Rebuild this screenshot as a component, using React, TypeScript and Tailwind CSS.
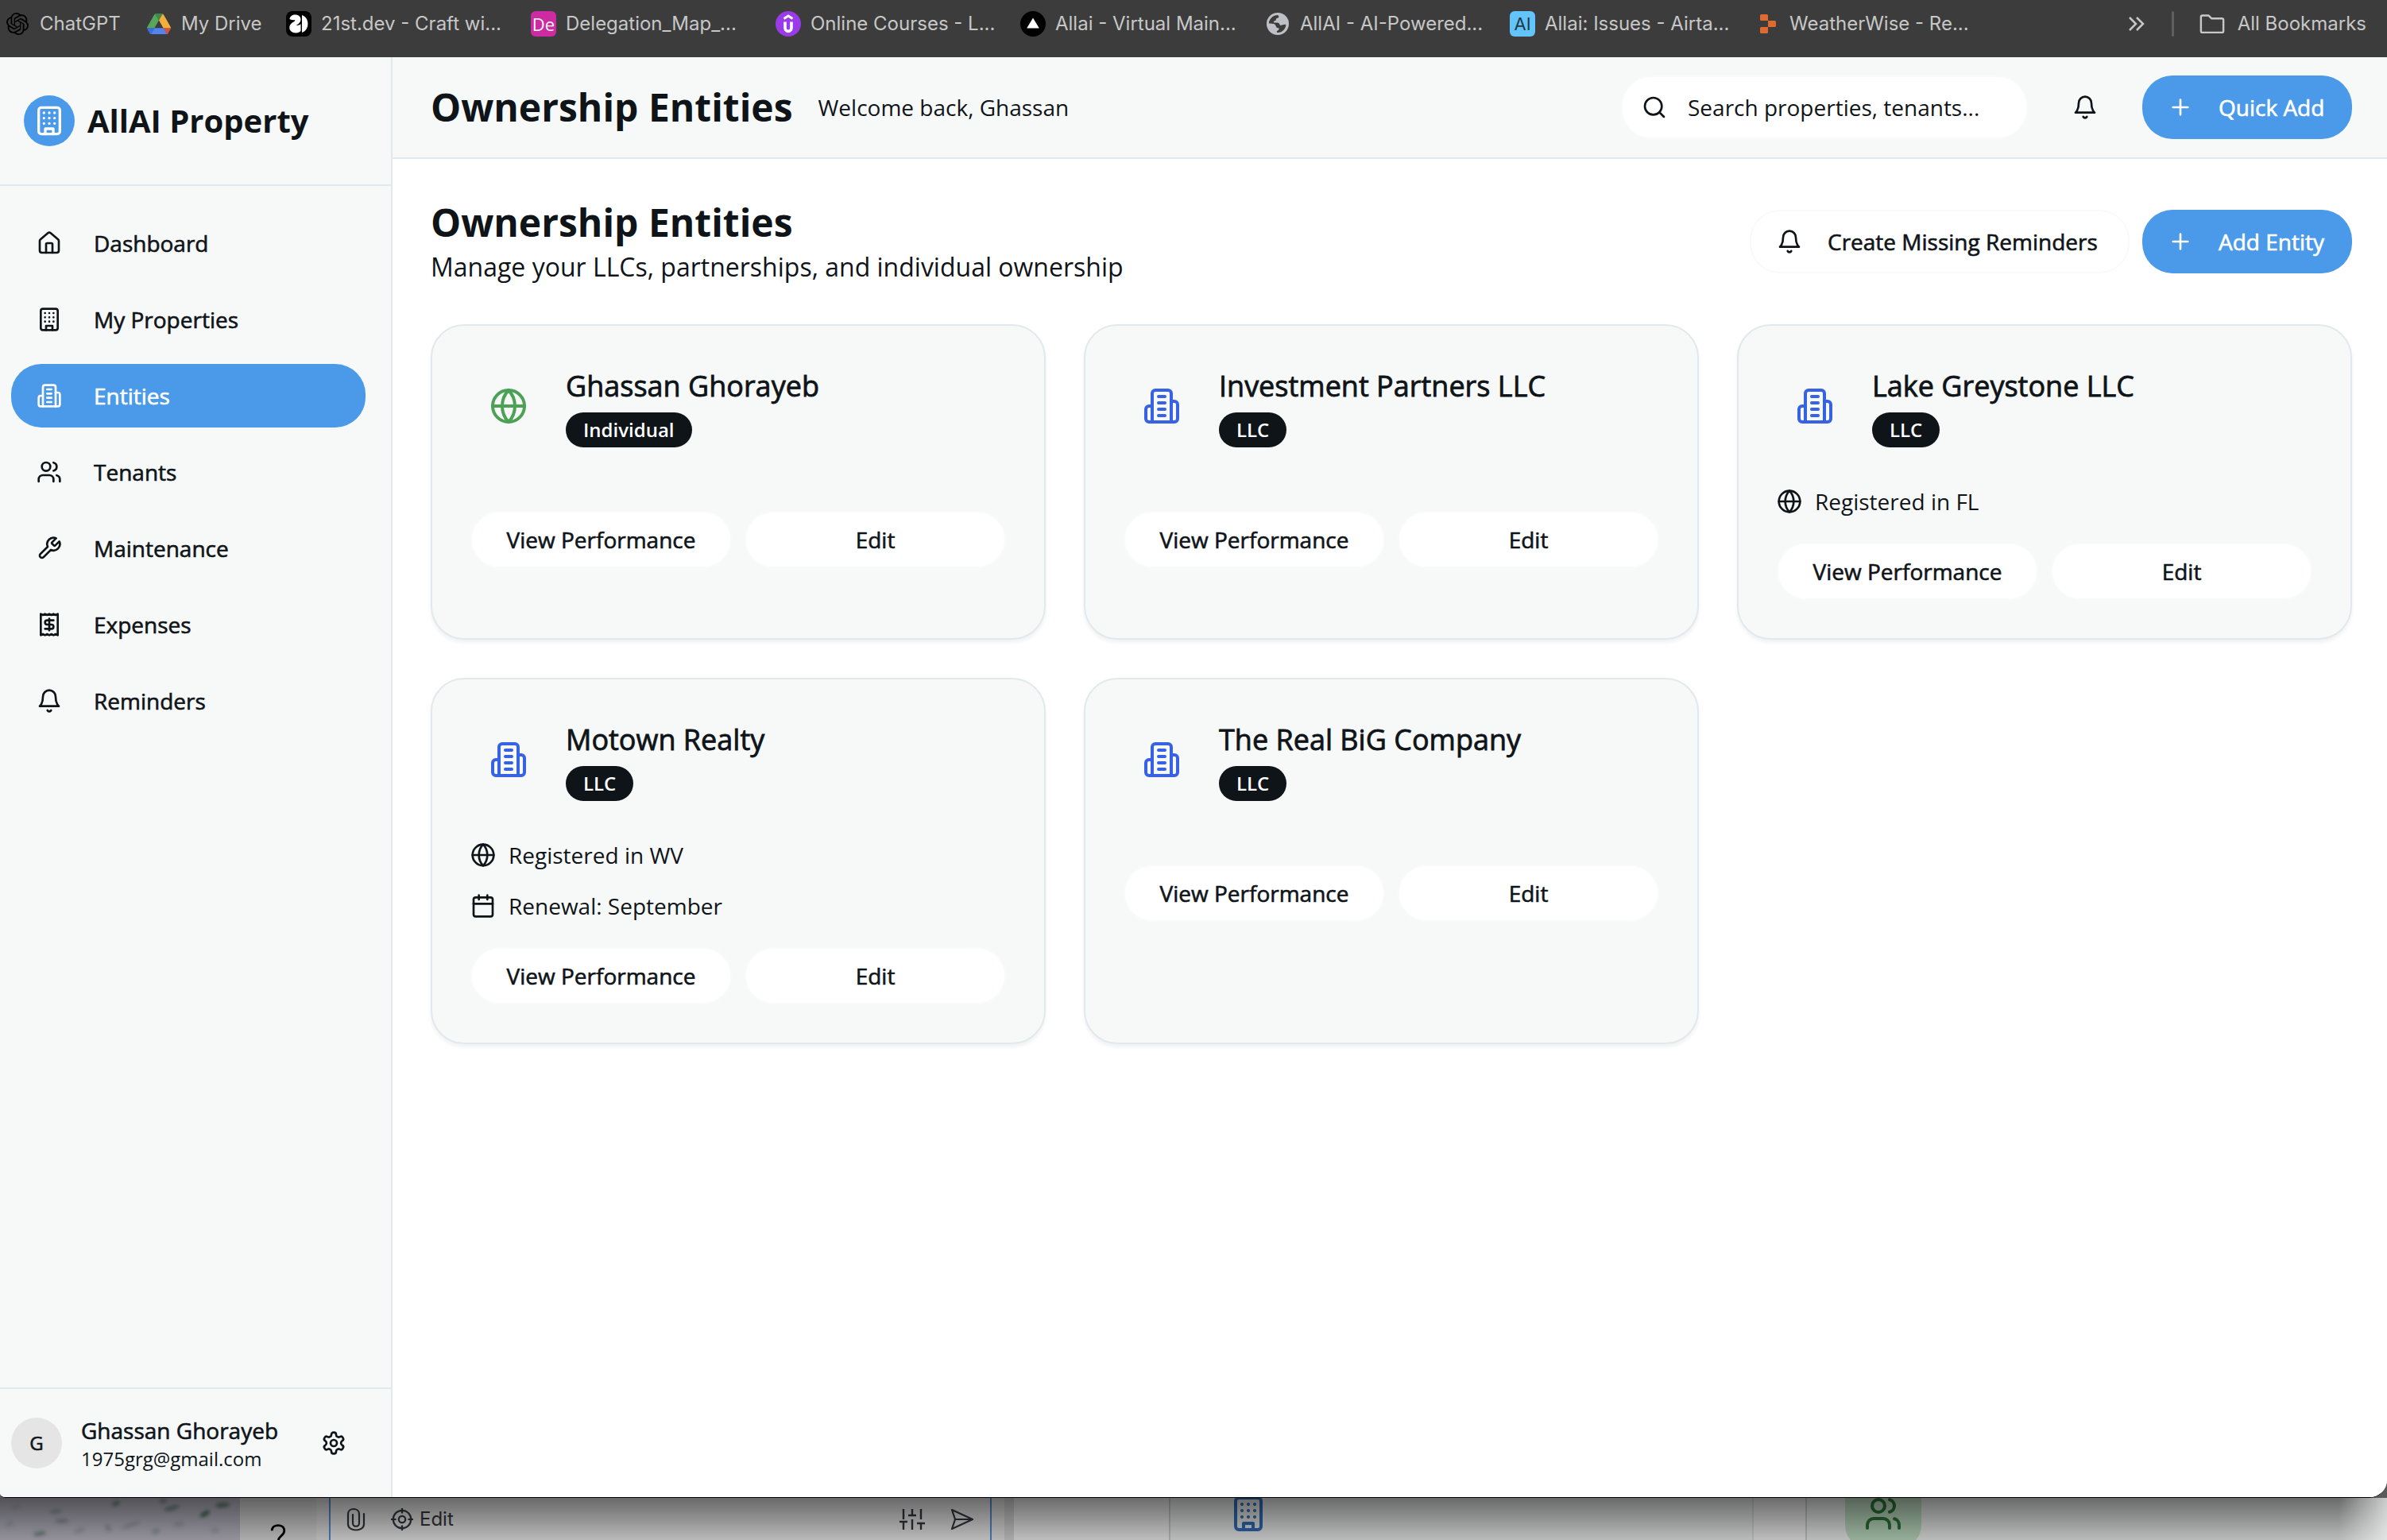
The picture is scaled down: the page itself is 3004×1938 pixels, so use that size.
import type { ReactNode } from "react";
import { SiOpenai } from "react-icons/si";

type IconProps = { className?: string };

function Stroke({ className = "size-8", children }: { className?: string; children: ReactNode }) {
  return (
    <svg
      viewBox="0 0 24 24"
      fill="none"
      stroke="currentColor"
      strokeWidth={2}
      strokeLinecap="round"
      strokeLinejoin="round"
      aria-hidden="true"
      className={"shrink-0 " + className}
    >
      {children}
    </svg>
  );
}

const HomeIcon = (p: IconProps) => (
  <Stroke {...p}>
    <path d="M15 21v-8a1 1 0 0 0-1-1h-4a1 1 0 0 0-1 1v8" />
    <path d="M3 10a2 2 0 0 1 .709-1.528l7-5.999a2 2 0 0 1 2.582 0l7 5.999A2 2 0 0 1 21 10v9a2 2 0 0 1-2 2H5a2 2 0 0 1-2-2z" />
  </Stroke>
);

const BuildingIcon = (p: IconProps) => (
  <Stroke {...p}>
    <rect width="16" height="20" x="4" y="2" rx="2" ry="2" />
    <path d="M9 22v-4h6v4" />
    <path d="M8 6h.01M16 6h.01M12 6h.01M12 10h.01M12 14h.01M16 10h.01M16 14h.01M8 10h.01M8 14h.01" />
  </Stroke>
);

const TowersIcon = (p: IconProps) => (
  <Stroke {...p}>
    <path d="M6 22V4a2 2 0 0 1 2-2h8a2 2 0 0 1 2 2v18Z" />
    <path d="M6 12H4a2 2 0 0 0-2 2v6a2 2 0 0 0 2 2h2" />
    <path d="M18 9h2a2 2 0 0 1 2 2v9a2 2 0 0 1-2 2h-2" />
    <path d="M10 6h4M10 10h4M10 14h4M10 18h4" />
  </Stroke>
);

const UsersIcon = (p: IconProps) => (
  <Stroke {...p}>
    <path d="M16 21v-2a4 4 0 0 0-4-4H6a4 4 0 0 0-4 4v2" />
    <circle cx="9" cy="7" r="4" />
    <path d="M22 21v-2a4 4 0 0 0-3-3.87" />
    <path d="M16 3.13a4 4 0 0 1 0 7.75" />
  </Stroke>
);

const WrenchIcon = (p: IconProps) => (
  <Stroke {...p}>
    <path d="M14.7 6.3a1 1 0 0 0 0 1.4l1.6 1.6a1 1 0 0 0 1.4 0l3.77-3.77a6 6 0 0 1-7.94 7.94l-6.91 6.91a2.12 2.12 0 0 1-3-3l6.91-6.91a6 6 0 0 1 7.94-7.94l-3.76 3.76z" />
  </Stroke>
);

const ReceiptIcon = (p: IconProps) => (
  <Stroke {...p}>
    <path d="M4 2v20l2-1 2 1 2-1 2 1 2-1 2 1 2-1 2 1V2l-2 1-2-1-2 1-2-1-2 1-2-1-2 1Z" />
    <path d="M16 8h-6a2 2 0 1 0 0 4h4a2 2 0 1 1 0 4H8" />
    <path d="M12 17.5v-11" />
  </Stroke>
);

const BellIcon = (p: IconProps) => (
  <Stroke {...p}>
    <path d="M6 8a6 6 0 0 1 12 0c0 7 3 9 3 9H3s3-2 3-9" />
    <path d="M10.3 21a1.94 1.94 0 0 0 3.4 0" />
  </Stroke>
);

const GlobeIcon = (p: IconProps) => (
  <Stroke {...p}>
    <circle cx="12" cy="12" r="10" />
    <path d="M12 2a14.5 14.5 0 0 0 0 20 14.5 14.5 0 0 0 0-20" />
    <path d="M2 12h20" />
  </Stroke>
);

const CalendarIcon = (p: IconProps) => (
  <Stroke {...p}>
    <path d="M8 2v4M16 2v4" />
    <rect width="18" height="18" x="3" y="4" rx="2" />
    <path d="M3 10h18" />
  </Stroke>
);

const PlusIcon = (p: IconProps) => (
  <Stroke {...p}>
    <path d="M5 12h14M12 5v14" />
  </Stroke>
);

const SearchIcon = (p: IconProps) => (
  <Stroke {...p}>
    <circle cx="11" cy="11" r="8" />
    <path d="m21 21-4.3-4.3" />
  </Stroke>
);

const SettingsIcon = (p: IconProps) => (
  <Stroke {...p}>
    <path d="M12.22 2h-.44a2 2 0 0 0-2 2v.18a2 2 0 0 1-1 1.73l-.43.25a2 2 0 0 1-2 0l-.15-.08a2 2 0 0 0-2.73.73l-.22.38a2 2 0 0 0 .73 2.73l.15.1a2 2 0 0 1 1 1.72v.51a2 2 0 0 1-1 1.74l-.15.09a2 2 0 0 0-.73 2.73l.22.38a2 2 0 0 0 2.73.73l.15-.08a2 2 0 0 1 2 0l.43.25a2 2 0 0 1 1 1.73V20a2 2 0 0 0 2 2h.44a2 2 0 0 0 2-2v-.18a2 2 0 0 1 1-1.73l.43-.25a2 2 0 0 1 2 0l.15.08a2 2 0 0 0 2.73-.73l.22-.39a2 2 0 0 0-.73-2.73l-.15-.08a2 2 0 0 1-1-1.74v-.5a2 2 0 0 1 1-1.74l.15-.09a2 2 0 0 0 .73-2.73l-.22-.38a2 2 0 0 0-2.73-.73l-.15.08a2 2 0 0 1-2 0l-.43-.25a2 2 0 0 1-1-1.73V4a2 2 0 0 0-2-2z" />
    <circle cx="12" cy="12" r="3" />
  </Stroke>
);

/* Favicons */

const DriveLogo = () => (
  <svg viewBox="0 0 87.3 78" className="w-[30px] shrink-0" aria-hidden="true">
    <path fill="#3b6fe0" d="m6.6 66.85 3.85 6.65c.8 1.4 1.95 2.5 3.3 3.3l13.75-23.8h-27.5c0 1.55.4 3.1 1.2 4.5z" />
    <path fill="#58a55c" d="m43.65 25-13.75-23.8c-1.35.8-2.5 1.9-3.3 3.3l-25.4 44a9.06 9.06 0 0 0 -1.2 4.5h27.5z" />
    <path fill="#d9523f" d="m73.55 76.8c1.35-.8 2.5-1.9 3.3-3.3l1.6-2.75 7.65-13.25c.8-1.4 1.2-2.95 1.2-4.5h-27.502l5.852 11.5z" />
    <path fill="#3f8a47" d="m43.65 25 13.75-23.8c-1.35-.8-2.9-1.2-4.5-1.2h-18.5c-1.6 0-3.15.45-4.5 1.2z" />
    <path fill="#5383ec" d="m59.8 53h-32.3l-13.75 23.8c1.35.8 2.9 1.2 4.5 1.2h50.8c1.6 0 3.15-.45 4.5-1.2z" />
    <path fill="#f1b03e" d="m73.4 26.5-12.7-22c-.8-1.4-1.95-2.5-3.3-3.3l-13.75 23.8 16.15 28h27.45c0-1.55-.4-3.1-1.2-4.5z" />
  </svg>
);

const TwentyFirstLogo = () => (
  <svg viewBox="0 0 32 32" className="size-8 shrink-0" aria-hidden="true">
    <rect width="32" height="32" rx="8" fill="#000" />
    <path
      fill="#fff"
      d="M4.400 10C5 6.600 8 4.600 11.500 4.600c4.200 0 7 2.400 7 6 0 3.400-2.400 5.800-5.800 7.200 2.200.3 4.200-.3 5.800-1.600V25c-1.400 1.600-3.400 2.400-6.200 2.400-4.800 0-8-2.600-8-6.600 0-3.400 2.200-5.600 5.200-7.200 1.200-.7 1.800-1.400 1.700-2.600-2 .6-4.200.2-6.800-1Z"
    />
    <path fill="#fff" d="M20 5c4.400 1.400 7.400 5.600 7.400 11S24.400 25.600 20 27Z" />
  </svg>
);

const UdemyLogo = () => (
  <svg viewBox="0 0 32 32" className="size-8 shrink-0" aria-hidden="true">
    <circle cx="16" cy="16" r="16" fill="#9a3ae8" />
    <path fill="none" stroke="#fff" strokeWidth="3" d="m10.500 9.500 5.500-3.500 5.500 3.500" />
    <path fill="none" stroke="#fff" strokeWidth="3.600" d="M12 13.500v7.500c0 5.800 8 5.800 8 0v-7.500" />
  </svg>
);

const TriangleLogo = () => (
  <svg viewBox="0 0 32 32" className="size-8 shrink-0" aria-hidden="true">
    <circle cx="16" cy="16" r="16" fill="#000" />
    <path fill="#fff" d="m16 8.500 7.800 13H8.200Z" />
  </svg>
);

const PlanetLogo = () => (
  <svg viewBox="0 0 32 32" className="size-8 shrink-0" aria-hidden="true">
    <circle cx="16" cy="16" r="14" fill="#bdc1c6" />
    <path
      fill="#3c3c3c"
      d="M4.800 15.500C5 10 9.500 5.400 15.500 4.900c2 .1 2.600 2.600.9 3.600-2.400.3-2.800 1.500-2.600 3-1.600.5-3 1.300-3 2.800 1.800.7 5.400-.6 7 1.200.8 1 .6 2.200 1.800 2.500 1.800.1 3.400-1.500 6.800-1.100-.4 5.200-4.600 9.800-10 10.200-1.700 0-2.200-1.600-1-2.400 1.500-.6 2.500-1.600 2.200-3.200-2.600-.2-4-1.400-4.300-3.800-1-1.800-3.700-2.400-8.500-2.200Z"
    />
  </svg>
);

const ReplitLogo = () => (
  <svg viewBox="0 0 32 32" className="size-8 shrink-0" aria-hidden="true">
    <path fill="#e0692d" d="M7 5.500Q7 4 8.500 4H15.500Q17 4 17 5.500V12H8.500Q7 12 7 10.500ZM17 12h8.500q1.500 0 1.500 1.500v5q0 1.500-1.500 1.500H17ZM7 21.500Q7 20 8.500 20H17v6.500q0 1.500-1.500 1.500H8.500Q7 28 7 26.500Z" />
  </svg>
);

const bookmarks: { label: string; width: string; logo: ReactNode }[] = [
  {
    label: "ChatGPT",
    width: "w-[178px]",
    logo: (
      <span className="flex size-8 shrink-0 items-center justify-center text-black">
        <SiOpenai className="size-7" />
      </span>
    ),
  },
  { label: "My Drive", width: "w-[176px]", logo: <span className="flex w-8 shrink-0 justify-center"><DriveLogo /></span> },
  { label: "21st.dev - Craft wi...", width: "w-[308px]", logo: <TwentyFirstLogo /> },
  {
    label: "Delegation_Map_...",
    width: "w-[308px]",
    logo: (
      <span className="flex size-8 shrink-0 items-center justify-center rounded-md bg-[#cc2ba2] font-['Open_Sans'] text-[22px] font-medium text-white">
        De
      </span>
    ),
  },
  { label: "Online Courses - L...", width: "w-[308px]", logo: <UdemyLogo /> },
  { label: "Allai - Virtual Main...", width: "w-[308px]", logo: <TriangleLogo /> },
  { label: "AllAI - AI-Powered...", width: "w-[308px]", logo: <PlanetLogo /> },
  {
    label: "Allai: Issues - Airta...",
    width: "w-[308px]",
    logo: (
      <span className="flex size-8 shrink-0 items-center justify-center rounded-md bg-[#63c4f9] text-[22px] text-[#1f3a4a]">
        AI
      </span>
    ),
  },
  { label: "WeatherWise - Re...", width: "w-[308px]", logo: <ReplitLogo /> },
];

function BookmarksBar() {
  return (
    <nav
      aria-label="Bookmarks"
      className="flex h-[72px] shrink-0 items-center bg-[#3c3c3c] pr-[26px] pb-3 pl-[6px] font-['Inter',sans-serif] text-[24px] leading-8 text-[#c7c7c7]"
    >
      {bookmarks.map((b) => (
        <a key={b.label} href="#" className={"flex shrink-0 items-center gap-3 whitespace-nowrap " + b.width}>
          {b.logo}
          {b.label}
        </a>
      ))}
      <button aria-label="More bookmarks" className="ml-auto">
        <svg viewBox="0 0 24 20" className="w-6" fill="none" stroke="currentColor" strokeWidth="2.500" aria-hidden="true">
          <path d="m3 2 8 8-8 8M12 2l8 8-8 8" />
        </svg>
      </button>
      <span className="mr-8 ml-8 h-8 w-[3px] rounded bg-[#5f5f5f]" />
      <a href="#" className="flex items-center gap-4 whitespace-nowrap">
        <svg viewBox="0 0 34 26" className="w-8" fill="none" stroke="currentColor" strokeWidth="2.600" strokeLinejoin="round" aria-hidden="true">
          <path d="M2 3.500Q2 1.500 4 1.500H12l4 4H30q2 0 2 2V22.500q0 2-2 2H4q-2 0-2-2Z" />
        </svg>
        All Bookmarks
      </a>
    </nav>
  );
}

const navItems = [
  { label: "Dashboard", Icon: HomeIcon },
  { label: "My Properties", Icon: BuildingIcon },
  { label: "Entities", Icon: TowersIcon, active: true },
  { label: "Tenants", Icon: UsersIcon },
  { label: "Maintenance", Icon: WrenchIcon },
  { label: "Expenses", Icon: ReceiptIcon },
  { label: "Reminders", Icon: BellIcon },
];

function Sidebar() {
  return (
    <aside className="flex w-[494px] shrink-0 flex-col border-r-2 border-[#e2e9ec] bg-[#f7f9f8]">
      <div className="flex h-[162px] items-center gap-4 border-b-2 border-[#e2e9ec] pl-[30px]">
        <span className="flex size-16 items-center justify-center rounded-full bg-[#4b9aea] text-white">
          <BuildingIcon className="size-10" />
        </span>
        <span className="text-[40px] leading-14 font-bold">AllAI Property</span>
      </div>
      <nav aria-label="Main" className="flex flex-1 flex-col gap-4 py-8 pr-8 pl-[14px]">
        {navItems.map(({ label, Icon, active }) => (
          <a
            key={label}
            href="#"
            aria-current={active ? "page" : undefined}
            className={
              "flex h-20 items-center gap-10 rounded-[38px] px-8 text-[28px] leading-10 font-medium [-webkit-text-stroke:0.6px] " +
              (active ? "bg-[#4b9aea] text-white" : "")
            }
          >
            <Icon />
            {label}
          </a>
        ))}
      </nav>
      <div className="flex items-center border-t-2 border-[#e2e9ec] py-8 pr-[56px] pl-[14px]">
        <span className="flex size-16 items-center justify-center rounded-full bg-[#e5e5e5] text-[24px] font-medium [-webkit-text-stroke:0.6px]">G</span>
        <div className="ml-6 flex-1">
          <p className="text-[28px] leading-10 font-medium [-webkit-text-stroke:0.6px]">Ghassan Ghorayeb</p>
          <p className="text-[24px] leading-8">1975grg@gmail.com</p>
        </div>
        <button aria-label="Settings">
          <SettingsIcon />
        </button>
      </div>
    </aside>
  );
}

function PrimaryButton({ children }: { children: ReactNode }) {
  return (
    <button className="flex h-20 min-w-[264px] items-center gap-8 rounded-[38px] bg-[#4b9aea] px-8 text-[28px] leading-10 font-medium whitespace-nowrap text-white [-webkit-text-stroke:0.6px]">
      <PlusIcon />
      {children}
    </button>
  );
}

function TopBar() {
  return (
    <header className="flex h-32 items-center border-b-2 border-[#e2e9ec] bg-[#f7f9f8] pr-11 pl-12">
      <h1 className="text-[48px] leading-16 font-bold">Ownership Entities</h1>
      <p className="ml-8 text-[28px] leading-10">Welcome back, Ghassan</p>
      <label className="mr-8 ml-auto flex h-20 w-[512px] items-center gap-[26px] rounded-[38px] border-2 border-[#f9fafa] bg-white px-6">
        <SearchIcon />
        <input
          type="search"
          aria-label="Search"
          placeholder="Search properties, tenants..."
          className="min-w-0 flex-1 bg-transparent text-[28px] leading-10 outline-none placeholder:text-[#0f1419]"
        />
      </label>
      <button aria-label="Notifications" className="mr-8 flex size-20 items-center justify-center">
        <BellIcon />
      </button>
      <PrimaryButton>Quick Add</PrimaryButton>
    </header>
  );
}

type Entity = { name: string; type: string; state?: string; renewal?: string };

const entities: Entity[] = [
  { name: "Ghassan Ghorayeb", type: "Individual" },
  { name: "Investment Partners LLC", type: "LLC" },
  { name: "Lake Greystone LLC", type: "LLC", state: "FL" },
  { name: "Motown Realty", type: "LLC", state: "WV", renewal: "September" },
  { name: "The Real BiG Company", type: "LLC" },
];

function CardButton({ children }: { children: ReactNode }) {
  return (
    <button className="h-[72px] flex-1 rounded-[38px] border-2 border-[#f9fafa] bg-white text-[28px] leading-10 font-medium [-webkit-text-stroke:0.6px]">
      {children}
    </button>
  );
}

function EntityCard({ name, type, state, renewal }: Entity) {
  const individual = type === "Individual";
  return (
    <article className="rounded-[42px] border-2 border-[#e2e9ec] bg-[#f7f9f8] p-12 shadow-[0_4px_4px_rgba(15,40,60,0.06)]">
      <div className="flex items-center gap-6">
        <span className={"flex size-24 items-center justify-center " + (individual ? "text-[#4ca154]" : "text-[#3662e3]")}>
          {individual ? <GlobeIcon className="size-12" /> : <TowersIcon className="size-12" />}
        </span>
        <div>
          <h3 className="text-[36px] leading-14 font-medium [-webkit-text-stroke:0.8px]">{name}</h3>
          <span className="mt-[5px] flex h-11 w-fit items-center rounded-full bg-[#0f1419] px-[22px] text-[24px] font-semibold text-white">
            {type}
          </span>
        </div>
      </div>
      <div className="mt-12 flex flex-col gap-6 text-[28px] leading-10">
        {state && (
          <p className="flex items-center gap-4">
            <GlobeIcon />
            Registered in {state}
          </p>
        )}
        {renewal && (
          <p className="flex items-center gap-4">
            <CalendarIcon />
            Renewal: {renewal}
          </p>
        )}
      </div>
      <div className="mt-8 flex gap-4">
        <CardButton>View Performance</CardButton>
        <CardButton>Edit</CardButton>
      </div>
    </article>
  );
}

function EntitiesPage() {
  return (
    <main className="flex-1 bg-white pt-12 pr-11 pl-12">
      <div className="mb-12 flex items-center gap-4">
        <div className="mr-auto">
          <h2 className="text-[48px] leading-16 font-bold">Ownership Entities</h2>
          <p className="text-[32px] leading-12">Manage your LLCs, partnerships, and individual ownership</p>
        </div>
        <button className="flex h-20 min-w-[478px] items-center gap-8 rounded-[38px] border-2 border-[#f9fafa] bg-white px-8 text-[28px] leading-10 font-medium whitespace-nowrap [-webkit-text-stroke:0.6px]">
          <BellIcon />
          Create Missing Reminders
        </button>
        <PrimaryButton>Add Entity</PrimaryButton>
      </div>
      <section aria-label="Entities" className="grid grid-cols-3 gap-12">
        {entities.map((e) => (
          <EntityCard key={e.name} {...e} />
        ))}
      </section>
    </main>
  );
}

/* Leaf flecks of the desktop photo: x, y, length, angle, opacity */
const flecks = [
  [146, 7, 10, -20, 0.6], [70, 17, 16, -5, 0.3], [78, 29, 18, 0, 0.35], [50, 45, 16, -8, 0.5],
  [216, 13, 20, -15, 0.5], [205, 4, 10, 10, 0.4], [258, 20, 14, -30, 0.9], [280, 9, 18, -5, 0.7],
  [136, 38, 10, 60, 0.3], [165, 34, 24, -20, 0.2], [100, 41, 14, -20, 0.2], [196, 42, 10, -15, 0.3],
  [12, 33, 12, -25, 0.15], [20, 12, 14, -20, 0.12], [225, 33, 14, -10, 0.2], [270, 41, 10, 10, 0.2],
];

/* Windows that show below the browser's bottom edge */
function Backdrop() {
  return (
    <div aria-hidden="true" className="relative flex h-[53px] shrink-0 overflow-hidden bg-[#f4f4f4] text-[#383a42]">
      <svg viewBox="0 0 302 53" className="h-full w-[302px] shrink-0 bg-[#c2bfcc]">
        <g className="blur-[2px]">
          {flecks.map(([x, y, len, angle, o]) => (
            <ellipse key={x + "-" + y} cx={x} cy={y} rx={len / 2} ry="3" fill="#3d6a50" opacity={o} transform={`rotate(${angle} ${x} ${y})`} />
          ))}
        </g>
      </svg>
      <div className="flex w-24 justify-center bg-[#e2e3e2] pt-8 text-black">
        <svg viewBox="0 0 18 30" className="h-[34px] w-[20px]" fill="none" stroke="currentColor" strokeWidth="2.500">
          <path d="M2 8C2 0 16 0 16 8c0 6-7 6-7 12v8" />
        </svg>
      </div>
      <div className="w-4 bg-[#ececec]" />
      <div className="flex h-[53px] w-[834px] items-center border-x-2 border-[#5b93dc] px-5 font-['Inter',sans-serif] text-[24px]">
        <svg viewBox="0 0 24 32" className="mr-8 h-8 w-6" fill="none" stroke="currentColor" strokeWidth="2.200" strokeLinecap="round">
          <path d="M22 9v13c0 10-20 10-20 0V9c0-8 14-8 14 0v12c0 5-8 5-8 0V10" />
        </svg>
        <svg viewBox="0 0 30 30" className="mr-2 size-7" fill="none" stroke="currentColor" strokeWidth="2.400">
          <circle cx="15" cy="15" r="12" />
          <circle cx="15" cy="15" r="4.500" />
          <path d="M15 0v7M15 23v7M0 15h7M23 15h7" />
        </svg>
        Edit
        <svg viewBox="0 0 32 28" className="mr-8 ml-auto w-8" fill="none" stroke="currentColor" strokeWidth="2.400">
          <path d="M5 1v13M0 17h10M5 17v10M16 1v9M11 9h10M16 14v13M27 1v13M22 19h10M27 19v8" />
        </svg>
        <svg viewBox="0 0 30 28" className="w-[30px]" fill="none" stroke="currentColor" strokeWidth="2.200" strokeLinejoin="round">
          <path d="M2 2 28 14 2 26l4-12ZM6 14h22" />
        </svg>
      </div>
      <div className="w-4 bg-[#f0f0f0]" />
      <div className="w-3 bg-[#dedede]" />
      <div className="w-[197px] border-r-2 border-[#d4d4d4] bg-[#fbfafb]" />
      <div className="w-[734px] border-r-2 border-[#e4e4e4] bg-[#f5f7f6] pl-[74px]">
        <BuildingIcon className="-mt-1 size-12 text-[#3273c4]" />
      </div>
      <div className="w-[67px] border-r-2 border-[#d4d4d4] bg-[#fbfafb]" />
      <div className="flex-1 bg-[#f5f7f6] pl-12">
        <div className="flex h-16 w-24 justify-center rounded-b-[30px] bg-[#c6e6ca] text-[#2f7a3a]">
          <UsersIcon className="-mt-1 size-12" />
        </div>
      </div>
      <div className="absolute inset-0 bg-linear-to-b from-black/57 to-black/24 [mask-image:linear-gradient(to_right,black_98%,rgba(0,0,0,0.3))]" />
    </div>
  );
}

export default function App() {
  return (
    <div className="flex min-h-screen flex-col bg-[#5a5a5a] font-['Open_Sans',sans-serif] text-[#0f1419]">
      <BookmarksBar />
      <div className="flex flex-1 overflow-hidden rounded-br-[22px] rounded-bl-[6px] border-b border-black bg-white">
        <Sidebar />
        <div className="flex min-w-0 flex-1 flex-col">
          <TopBar />
          <EntitiesPage />
        </div>
      </div>
      <Backdrop />
    </div>
  );
}
